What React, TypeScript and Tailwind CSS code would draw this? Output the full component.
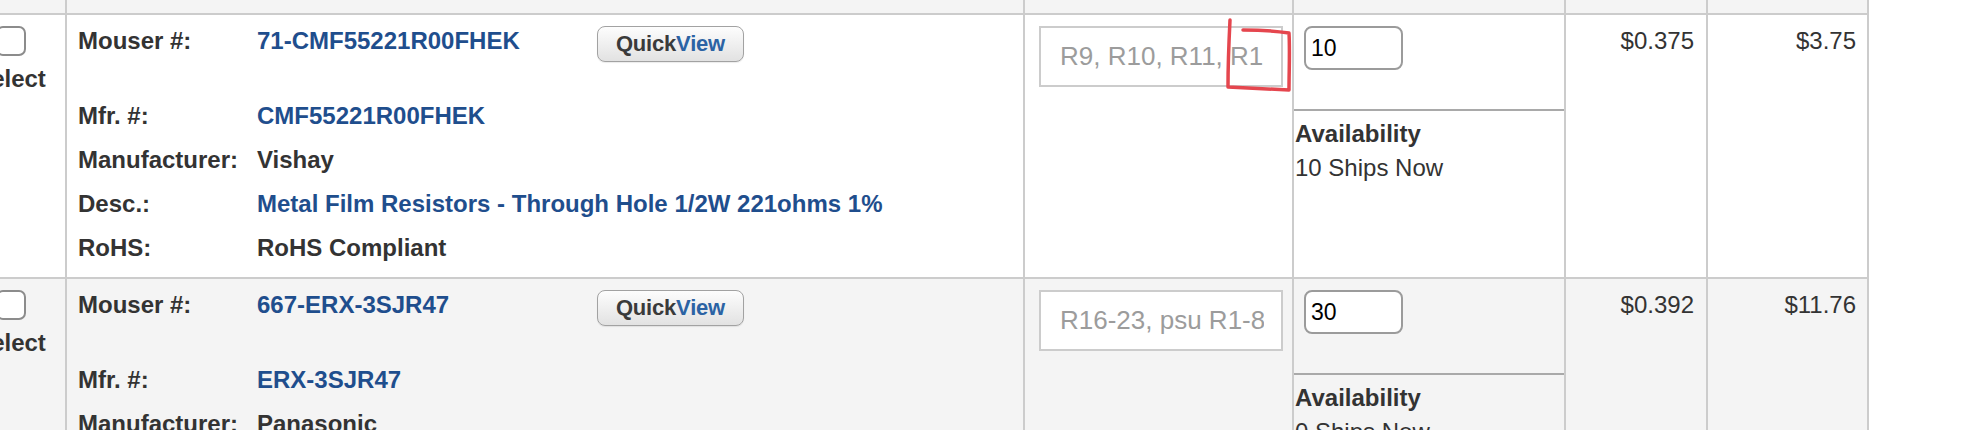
import React from 'react';

type Part = {
  mouser: string;
  mfr: string;
  manufacturer: string;
  desc: string;
  rohs: string;
  refs: string;
  qty: string;
  ships: string;
  unit: string;
  ext: string;
};

const parts: Part[] = [
  {
    mouser: '71-CMF55221R00FHEK',
    mfr: 'CMF55221R00FHEK',
    manufacturer: 'Vishay',
    desc: 'Metal Film Resistors - Through Hole 1/2W 221ohms 1%',
    rohs: 'RoHS Compliant',
    refs: 'R9, R10, R11, R12',
    qty: '10',
    ships: '10 Ships Now',
    unit: '$0.375',
    ext: '$3.75',
  },
  {
    mouser: '667-ERX-3SJR47',
    mfr: 'ERX-3SJR47',
    manufacturer: 'Panasonic',
    desc: 'Metal Oxide Resistors - Through Hole 3W 0.47ohm 5%',
    rohs: 'RoHS Compliant',
    refs: 'R16-23, psu R1-8',
    qty: '30',
    ships: '0 Ships Now',
    unit: '$0.392',
    ext: '$11.76',
  },
];

const cell = 'border-r-2 border-[#cccccc]';

function QuickView() {
  return (
    <button className="-mt-[1px] w-[147px] h-[36px] rounded-[8px] border-[1.5px] border-[#a2a2a2] bg-gradient-to-b from-[#fdfdfd] to-[#e2e2e2] text-[22px] font-bold leading-none tracking-[-0.2px] shadow-[0_1px_1px_rgba(0,0,0,0.08)]">
      <span className="text-[#3a3a3a]">Quick</span>
      <span className="text-[#2b63a4]">View</span>
    </button>
  );
}

function InfoLine({ label, children, last }: { label: string; children: React.ReactNode; last?: boolean }) {
  return (
    <div className={`flex ${last ? 'h-[28px]' : 'h-[44px]'}`}>
      <div className="w-[179px] text-[#333333] font-bold">{label}</div>
      <div className="font-bold">{children}</div>
    </div>
  );
}

function PartRow({ p, shaded }: { p: Part; shaded?: boolean }) {
  return (
    <div className={`flex h-[264px] border-b-2 border-[#cccccc] ${shaded ? 'bg-[#f4f4f4]' : 'bg-white'}`}>
      {/* select */}
      <div className={`${cell} w-[111px] flex flex-col items-center pt-[11px]`}>
        <div className="w-[30px] h-[30px] rounded-[7px] border-2 border-[#8c8c8c] bg-white" />
        <div className="mt-[9px] font-bold text-[#333333]">Select</div>
      </div>

      {/* part info */}
      <div className={`${cell} w-[958px] pt-[12px] pl-[11px] text-[24px] leading-[28px]`}>
        <div className="flex items-start h-[75px]">
          <div className="w-[179px] text-[#333333] font-bold">Mouser #:</div>
          <div className="w-[340px] font-bold text-[#1f4e8d]">{p.mouser}</div>
          <QuickView />
        </div>
        <InfoLine label="Mfr. #:">
          <span className="text-[#1f4e8d]">{p.mfr}</span>
        </InfoLine>
        <InfoLine label="Manufacturer:">
          <span className="text-[#333333]">{p.manufacturer}</span>
        </InfoLine>
        <InfoLine label="Desc.:">
          <span className="text-[#1f4e8d]">{p.desc}</span>
        </InfoLine>
        <InfoLine label="RoHS:" last>
          <span className="text-[#333333]">{p.rohs}</span>
        </InfoLine>
      </div>

      {/* customer reference */}
      <div className={`${cell} w-[269px] pt-[11px] pl-[14px]`}>
        <input
          readOnly
          defaultValue={p.refs}
          className="w-[244px] h-[61px] border-2 border-[#cccccc] bg-white pl-[19px] pr-[17px] text-[26px] text-[#9c9c9c] outline-none font-['Liberation_Sans',Arial,sans-serif]"
        />
      </div>

      {/* quantity + availability */}
      <div className={`${cell} w-[272px] flex flex-col`}>
        <div className="h-[96px] border-b-2 border-[#a9a9a9] pt-[11px] pl-[10px]">
          <input
            readOnly
            defaultValue={p.qty}
            className="w-[99px] h-[44px] rounded-[8px] border-2 border-[#9b9b9b] bg-white pl-[5px] text-[23px] text-black outline-none font-['Liberation_Sans',Arial,sans-serif]"
          />
        </div>
        <div className="pt-[6px] pl-[1px] text-[24px] leading-[34px] text-[#333333]">
          <div className="font-bold">Availability</div>
          <div>{p.ships}</div>
        </div>
      </div>

      {/* unit price */}
      <div className={`${cell} w-[142px] pt-[12px] pr-[12px] text-right text-[24px] leading-[28px] text-[#333333]`}>
        {p.unit}
      </div>

      {/* extended price */}
      <div className={`${cell} w-[161px] pt-[12px] pr-[11px] text-right text-[24px] leading-[28px] text-[#333333]`}>
        {p.ext}
      </div>
    </div>
  );
}

export default function App() {
  return (
    <div className="relative w-[1984px] h-[430px] overflow-hidden bg-white font-['Liberation_Sans',Arial,sans-serif] text-[24px] leading-[28px]">
      <div className="ml-[-44px] w-[1913px]">
        <div className="flex h-[15px] border-b-2 border-[#cccccc] bg-[#f4f4f4]">
          <div className={`${cell} w-[111px]`} />
          <div className={`${cell} w-[958px]`} />
          <div className={`${cell} w-[269px]`} />
          <div className={`${cell} w-[272px]`} />
          <div className={`${cell} w-[142px]`} />
          <div className={`${cell} w-[161px]`} />
        </div>
        {parts.map((p, i) => (
          <PartRow key={p.mouser} p={p} shaded={i % 2 === 1} />
        ))}
      </div>

      {/* hand-drawn red markup around the clipped reference */}
      <svg className="absolute left-0 top-0 pointer-events-none" width="1984" height="430">
        <path
          d="M1230 20 C1229 40 1228 65 1228 87 C1248 88 1270 89 1289 90 C1289 72 1290 50 1289 33 C1275 31 1258 30 1243 30"
          fill="none"
          stroke="#e5464e"
          strokeWidth="3.5"
          strokeLinecap="round"
          strokeLinejoin="round"
        />
      </svg>
    </div>
  );
}
